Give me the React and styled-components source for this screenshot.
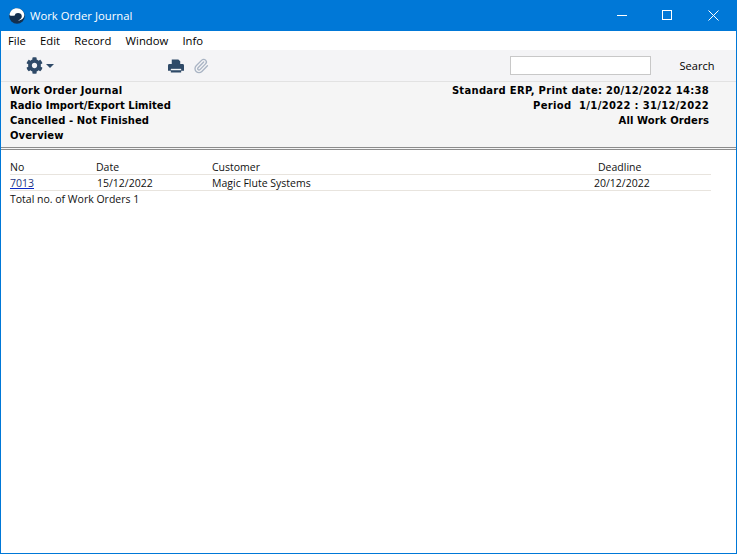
import React from 'react';
import styled, { createGlobalStyle } from 'styled-components';
import { FaCog } from 'react-icons/fa';
import { Paperclip } from 'lucide-react';

const GlobalStyle = createGlobalStyle`
  html, body { margin: 0; padding: 0; background: #fff; }
  #root { height: 554px; }
`;

const Window = styled.div`
  box-sizing: border-box;
  width: 737px;
  height: 554px;
  border: 1px solid #0078d7;
  border-top: none;
  display: flex;
  flex-direction: column;
  background: #fff;
  font-family: "Open Sans", sans-serif;
  font-size: 10.5px;
  color: #111;
`;

const TitleBar = styled.div`
  height: 31px;
  margin: 0 -1px;
  padding: 0 1px 0 9px;
  background: #0078d7;
  color: #fff;
  display: flex;
  align-items: center;
  font-size: 11.3px;
`;

const Title = styled.span`
  margin-left: 5px;
  flex: 1;
`;

const WinButton = styled.div`
  width: 45.5px;
  height: 31px;
  display: flex;
  align-items: center;
  justify-content: center;
`;

const MenuBar = styled.div`
  height: 19px;
  display: flex;
  align-items: center;
  padding-left: 7px;
  gap: 14.2px;
  font-size: 11.3px;
  color: #000;
`;

const ToolBar = styled.div`
  height: 32px;
  box-sizing: border-box;
  background: #f4f4f6;
  border-bottom: 1px solid #e2e2e2;
  display: flex;
  align-items: center;
  padding-left: 25px;
  color: #2f4a68;
`;

const Caret = styled.span`
  width: 0;
  height: 0;
  margin-left: 3px;
  margin-right: 113px;
  border-left: 4px solid transparent;
  border-right: 4px solid transparent;
  border-top: 4px solid #2f4a68;
`;

const ClipIcon = styled(Paperclip)`
  margin-left: 9px;
  color: #a9b4c4;
`;

const SearchBox = styled.input`
  box-sizing: border-box;
  width: 141px;
  height: 19px;
  margin-left: auto;
  border: 1px solid #c8c8c8;
  background: #fff;
  padding: 0;
`;

const SearchLabel = styled.span`
  box-sizing: border-box;
  width: 85px;
  padding-left: 7px;
  text-align: center;
  font-size: 11px;
  color: #000;
`;

const ReportHead = styled.div`
  box-sizing: border-box;
  height: 68px;
  padding: 1px 27px 0 9px;
  background: #f5f5f5;
  border-bottom: 3px double #8c8c8c;
  display: flex;
  justify-content: space-between;
  font-family: "DejaVu Sans", Verdana, sans-serif;
  font-size: 10px;
  font-weight: 700;
  line-height: 15px;
  color: #000;
`;

const HeadColumn = styled.div`
  text-align: ${(p) => (p.$right ? 'right' : 'left')};
`;

const HeadLine = styled.div`
  white-space: pre;
  letter-spacing: ${(p) => p.$track || 0}px;
`;

const Table = styled.div`
  width: 701px;
  margin: 9px 0 0 9px;
`;

const Row = styled.div`
  display: grid;
  grid-template-columns: 86px 116px 382px 1fr;
  height: 15px;
  line-height: 17px;
  border-bottom: ${(p) => (p.$plain ? 'none' : '1px solid #e8e4de')};
`;

const Cell = styled.div`
  padding-left: ${(p) => p.$indent || 0}px;
  white-space: nowrap;
`;

const OrderLink = styled.a`
  color: #26367f;
  text-decoration: underline;
  text-decoration-color: #0a28c8;
`;

const Logo = () => (
  <svg width="16" height="16" viewBox="0 0 16 16">
    <circle cx="8" cy="8" r="7.8" fill="#14304f" />
    <path d="M.5 7C1 3 4 .3 8 .3c4 0 7 3 7.300 6.700 0 3-3 5.500-6.300 5.500 2.300-.8 3.800-2.300 3.800-4.300 0-2-1.800-3.200-3.800-3.200-1.800 0-3 .8-3.200 2.500C3.500 8 1.500 8 .5 7z" fill="#fff" />
  </svg>
);

const PrintIcon = () => (
  <svg width="16" height="14" viewBox="0 0 17 14" style={{ marginLeft: 1 }}>
    <path fill="#2f4a68" d="M4 0h7l2 2v3H4zM1.500 5h14a1.500 1.500 0 0 1 1.500 1.500V12h-3v2H3v-2H0V6.500A1.500 1.500 0 0 1 1.500 5z" />
    <path fill="#f4f4f6" d="M3 10h11v1.500H3z" />
  </svg>
);

export default function App() {
  return (
    <Window>
      <GlobalStyle />
      <TitleBar>
        <Logo />
        <Title>Work Order Journal</Title>
        <WinButton>
          <svg width="11" height="11" viewBox="0 0 11 11"><path d="M0 5.500h10" stroke="#fff" /></svg>
        </WinButton>
        <WinButton>
          <svg width="11" height="11" viewBox="0 0 11 11"><rect x=".5" y=".5" width="9" height="9" fill="none" stroke="#fff" /></svg>
        </WinButton>
        <WinButton>
          <svg width="11" height="11" viewBox="0 0 11 11"><path d="M.5.500l10 10M10.500.500l-10 10" stroke="#fff" /></svg>
        </WinButton>
      </TitleBar>
      <MenuBar>
        <span>File</span>
        <span>Edit</span>
        <span>Record</span>
        <span>Window</span>
        <span>Info</span>
      </MenuBar>
      <ToolBar>
        <FaCog size={17} />
        <Caret />
        <PrintIcon />
        <ClipIcon size={16} strokeWidth={2} />
        <SearchBox />
        <SearchLabel>Search</SearchLabel>
      </ToolBar>
      <ReportHead>
        <HeadColumn>
          <HeadLine $track={0.22}>Work Order Journal</HeadLine>
          <HeadLine $track={0.04}>Radio Import/Export Limited</HeadLine>
          <HeadLine $track={0.08}>Cancelled - Not Finished</HeadLine>
          <HeadLine $track={0.1}>Overview</HeadLine>
        </HeadColumn>
        <HeadColumn $right>
          <HeadLine $track={0.29}>Standard ERP, Print date: 20/12/2022 14:38</HeadLine>
          <HeadLine $track={0.33}>Period  1/1/2022 : 31/12/2022</HeadLine>
          <HeadLine $track={0.1}>All Work Orders</HeadLine>
        </HeadColumn>
      </ReportHead>
      <Table>
        <Row>
          <Cell>No</Cell>
          <Cell>Date</Cell>
          <Cell>Customer</Cell>
          <Cell $indent={4}>Deadline</Cell>
        </Row>
        <Row>
          <Cell><OrderLink href="#">7013</OrderLink></Cell>
          <Cell $indent={1}>15/12/2022</Cell>
          <Cell>Magic Flute Systems</Cell>
          <Cell>20/12/2022</Cell>
        </Row>
        <Row $plain>
          <Cell>Total no. of Work Orders 1</Cell>
        </Row>
      </Table>
    </Window>
  );
}
